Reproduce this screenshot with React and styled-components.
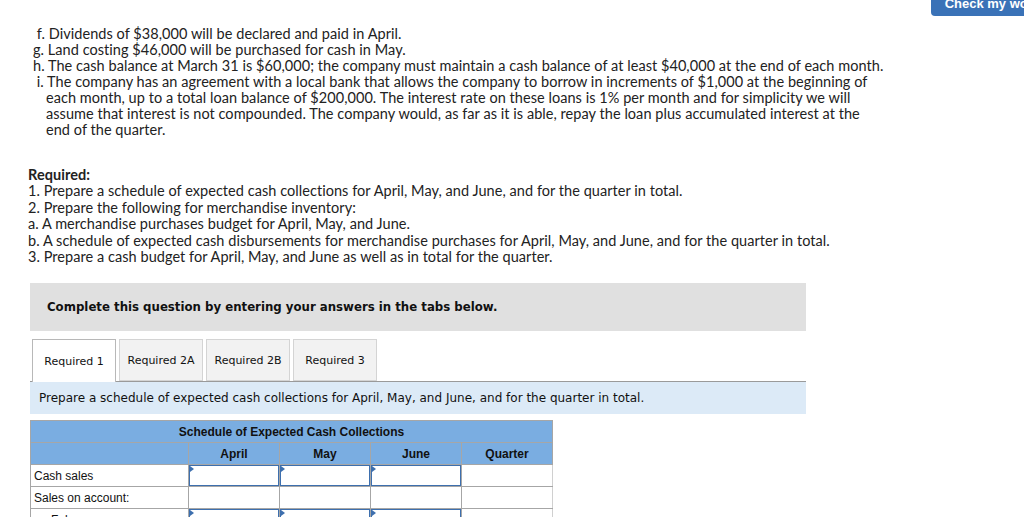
import React from "react";
import styled, { createGlobalStyle } from "styled-components";

const Global = createGlobalStyle`
  html, body {
    margin: 0;
    padding: 0;
    background: #fff;
    overflow: hidden;
  }
  body {
    width: 1024px;
    height: 517px;
  }
`;

const TopBar = styled.div`
  display: flex;
  justify-content: flex-end;
  height: 26px;
  overflow: hidden;
`;

const CheckButton = styled.button`
  margin-top: -9px;
  margin-right: -30px;
  height: 25px;
  padding: 0 14px;
  background: #3a72b7;
  color: #fff;
  border: none;
  border-radius: 0 0 4px 4px;
  font-family: "Liberation Sans", Arial, sans-serif;
  font-weight: bold;
  font-size: 13px;
  white-space: nowrap;
  align-self: flex-start;
`;

const Problem = styled.div`
  padding-left: 33px;
  font-family: Lato, "Open Sans", sans-serif;
  font-size: 14.5px;
  letter-spacing: 0.05px;
  line-height: 16px;
  color: #222;
`;

const Item = styled.div`
  padding-left: ${(p) => p.$hang || 0}px;
  text-indent: -${(p) => p.$hang || 0}px;
  width: ${(p) => p.$w || 880}px;
`;

const Required = styled.div`
  margin-top: 29px;
  padding-left: 28px;
  font-family: Lato, "Open Sans", sans-serif;
  font-size: 14.5px;
  letter-spacing: 0.05px;
  line-height: 16.4px;
  color: #222;
  b {
    font-weight: bold;
  }
`;

const Panel = styled.div`
  margin: 18px 0 0 30px;
  width: 776px;
  font-family: "DejaVu Sans", Verdana, sans-serif;
`;

const Instruction = styled.div`
  background: #e0e0e0;
  height: 48px;
  display: flex;
  align-items: center;
  padding-left: 17px;
  font-weight: bold;
  font-size: 11.75px;
  color: #111;
`;

const Tabs = styled.div`
  display: flex;
  gap: 3px;
  margin-top: 8px;
  padding-left: 2px;
  border-bottom: 1px solid #9a9a9a;
  height: 42px;
`;

const Tab = styled.div`
  width: 84px;
  height: ${(p) => (p.$active ? 43 : 42)}px;
  box-sizing: border-box;
  display: flex;
  align-items: center;
  justify-content: center;
  font-size: 11px;
  color: #111;
  background: ${(p) => (p.$active ? "#fff" : "#f2f2f2")};
  border: 1px solid ${(p) => (p.$active ? "#b8b8b8" : "#d4d4d4")};
  border-bottom: ${(p) => (p.$active ? "none" : "1px solid #d4d4d4")};
  margin-bottom: ${(p) => (p.$active ? -1 : 0)}px;
`;

const Prompt = styled.div`
  background: #dceaf7;
  height: 32px;
  display: flex;
  align-items: center;
  padding-left: 9px;
  font-size: 12px;
  color: #111;
`;

const Table = styled.table`
  margin: 6px 0 0 30px;
  border-collapse: collapse;
  table-layout: fixed;
  font-family: "Liberation Sans", Arial, sans-serif;
  font-size: 12px;
  color: #111;
  td, th {
    border: 1px solid #a6a6a6;
    height: 22px;
    padding: 0;
    box-sizing: border-box;
  }
  th {
    background: #7aade1;
    font-weight: bold;
    font-size: 12px;
  }
`;

const LabelCell = styled.td`
  width: 158px;
  padding-left: ${(p) => (p.$indent ? 20 : 3)}px !important;
  text-align: left;
  white-space: nowrap;
  overflow: hidden;
`;

const NumCell = styled.td`
  width: 91px;
  position: relative;
  border-right-color: ${(p) => (p.$light ? "#d0d0d0" : "#a6a6a6")} !important;
`;

const Entry = styled.div`
  position: absolute;
  inset: 0;
  border: 1px solid #3d6fae;
  background: #fff;
  &::before {
    content: "";
    position: absolute;
    left: 0;
    top: 0;
    border-top: 3px solid transparent;
    border-bottom: 3px solid transparent;
    border-left: 4px solid #3d6fae;
  }
`;

const months = ["April", "May", "June"];

const rows = [
  { label: "Cash sales", input: true },
  { label: "Sales on account:", input: false },
  { label: "February", input: true, indent: true },
];

export default function App() {
  return (
    <>
      <Global />
      <TopBar>
        <CheckButton>Check my work</CheckButton>
      </TopBar>
      <Problem>
        <Item>&nbsp;f. Dividends of $38,000 will be declared and paid in April.</Item>
        <Item>g. Land costing $46,000 will be purchased for cash in May.</Item>
        <Item>
          h. The cash balance at March 31 is $60,000; the company must maintain a cash balance of at least
          $40,000 at the end of each month.
        </Item>
        <Item $hang={13} $w={824}>
          &nbsp;i. The company has an agreement with a local bank that allows the company to borrow in
          increments of $1,000 at the beginning of each month, up to a total loan balance of $200,000. The
          interest rate on these loans is 1% per month and for simplicity we will assume that interest is
          not compounded. The company would, as far as it is able, repay the loan plus accumulated interest
          at the end of the quarter.
        </Item>
      </Problem>
      <Required>
        <b>Required:</b>
        <div>1. Prepare a schedule of expected cash collections for April, May, and June, and for the quarter in total.</div>
        <div>2. Prepare the following for merchandise inventory:</div>
        <div>a. A merchandise purchases budget for April, May, and June.</div>
        <div>b. A schedule of expected cash disbursements for merchandise purchases for April, May, and June, and for the quarter in total.</div>
        <div>3. Prepare a cash budget for April, May, and June as well as in total for the quarter.</div>
      </Required>
      <Panel>
        <Instruction>Complete this question by entering your answers in the tabs below.</Instruction>
        <Tabs>
          <Tab $active>Required 1</Tab>
          <Tab>Required 2A</Tab>
          <Tab>Required 2B</Tab>
          <Tab>Required 3</Tab>
        </Tabs>
        <Prompt>Prepare a schedule of expected cash collections for April, May, and June, and for the quarter in total.</Prompt>
      </Panel>
      <Table>
        <thead>
          <tr>
            <th colSpan={5}>Schedule of Expected Cash Collections</th>
          </tr>
          <tr>
            <th style={{ width: 158 }}></th>
            {months.map((m) => (
              <th key={m} style={{ width: 91 }}>{m}</th>
            ))}
            <th style={{ width: 91 }}>Quarter</th>
          </tr>
        </thead>
        <tbody>
          {rows.map((r) => (
            <tr key={r.label}>
              <LabelCell $indent={r.indent}>{r.label}</LabelCell>
              {months.map((m) => (
                <NumCell key={m}>{r.input && <Entry />}</NumCell>
              ))}
              <NumCell $light />
            </tr>
          ))}
        </tbody>
      </Table>
    </>
  );
}
